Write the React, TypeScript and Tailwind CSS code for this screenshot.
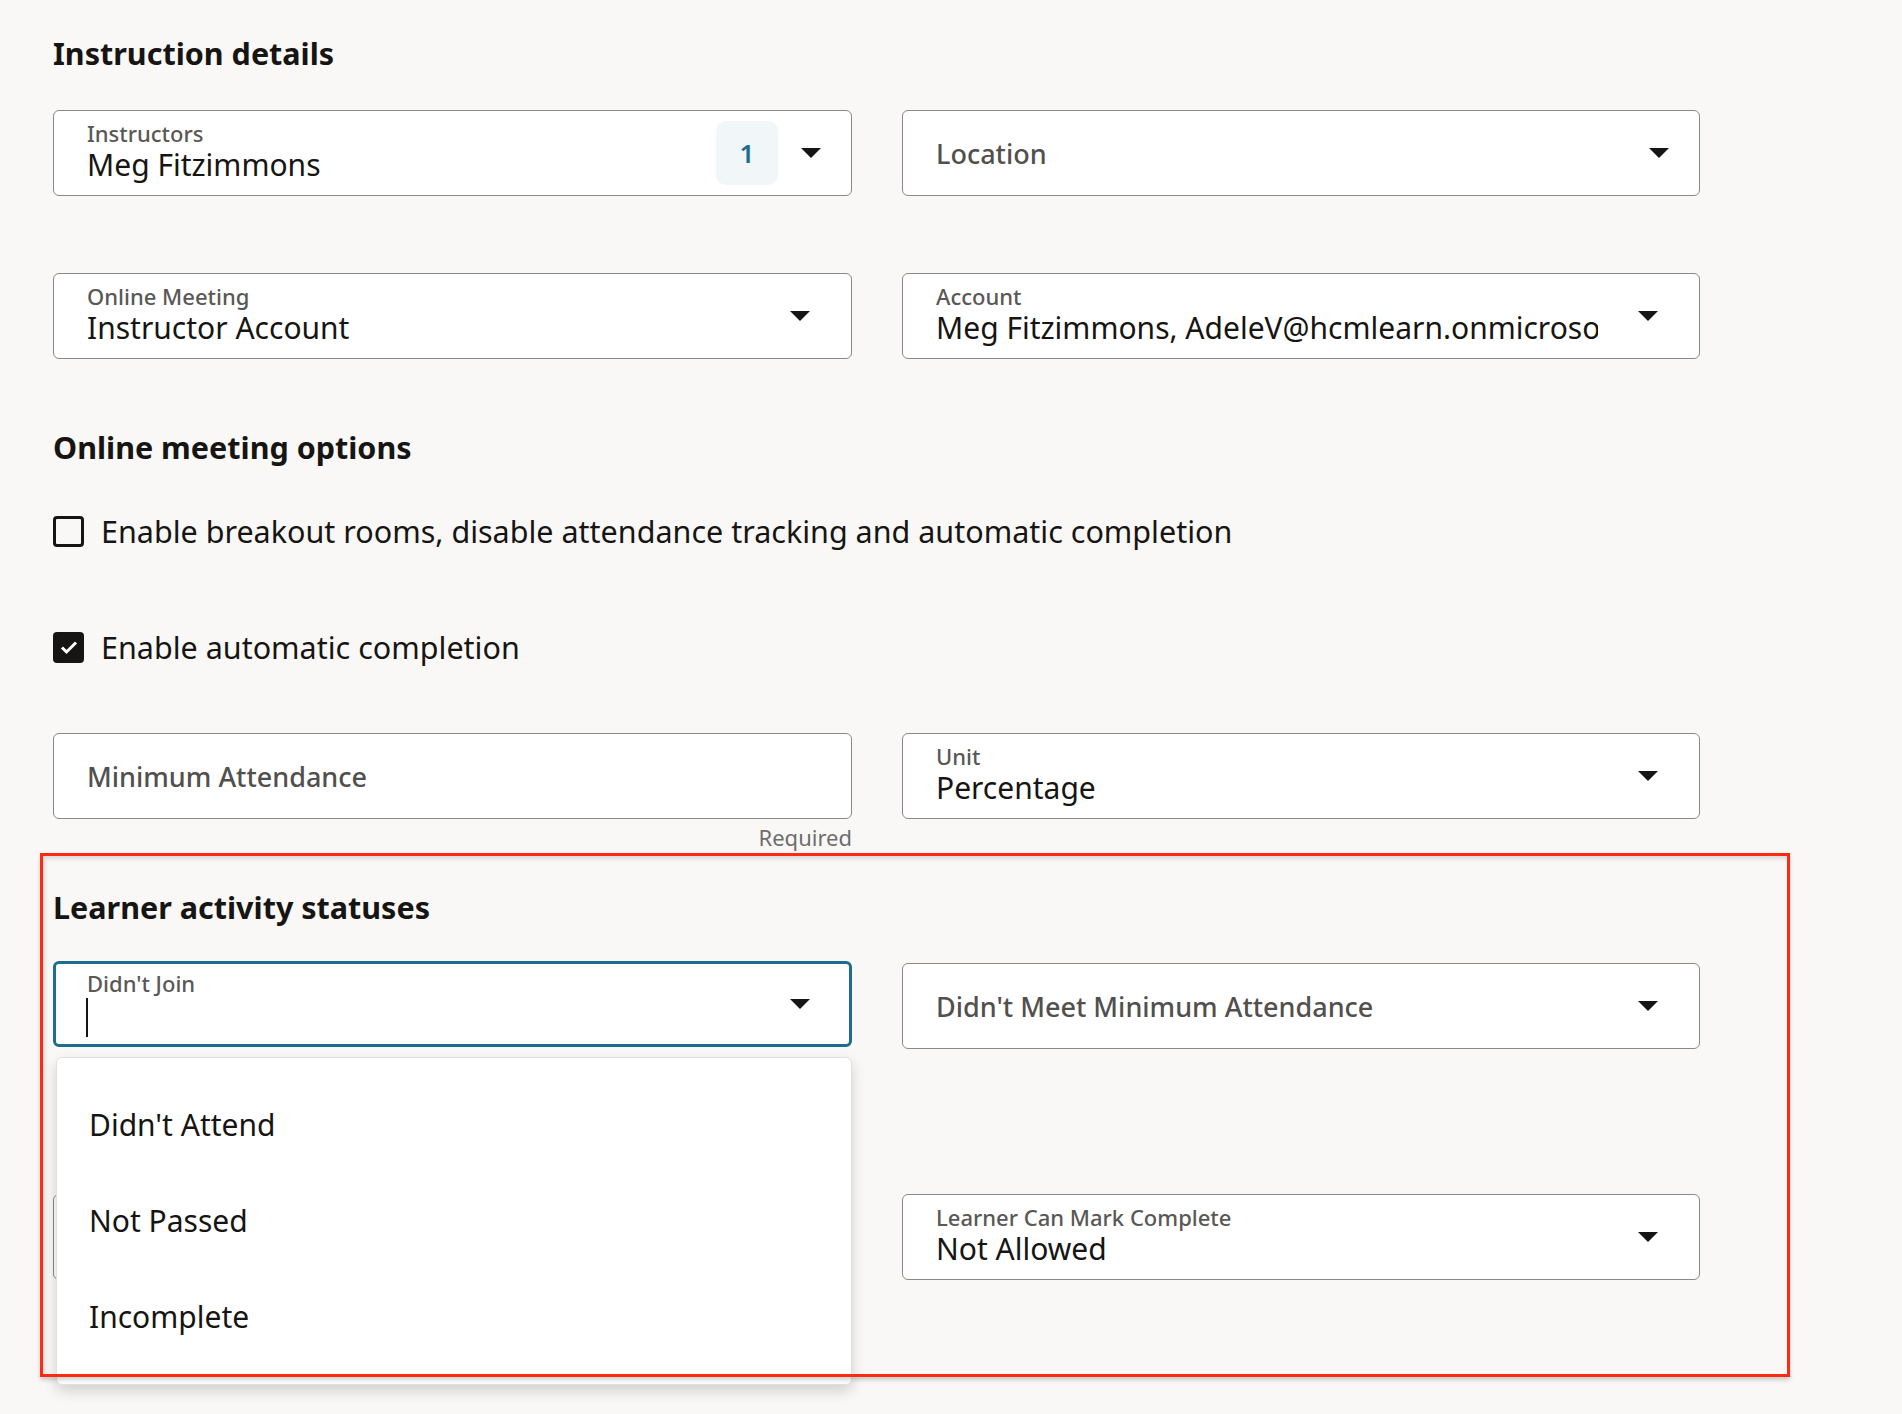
import React from "react";

type FieldProps = {
  label?: string;
  value?: string;
  placeholder?: string;
  badge?: string;
  focused?: boolean;
  tight?: boolean;
  cursor?: boolean;
  noArrow?: boolean;
};

function Arrow() {
  return (
    <svg width="20" height="10" viewBox="0 0 20 10" className="shrink-0">
      <path d="M0 0h20L10 10z" fill="#161513" />
    </svg>
  );
}

function Field({ label, value, placeholder, badge, focused, tight, cursor, noArrow }: FieldProps) {
  const frame = focused
    ? "border-[3px] border-[#1d6d8f] pl-[31px] pr-[39px]"
    : tight
      ? "border border-[#8b8987] pl-[33px] pr-[30px]"
      : "border border-[#8b8987] pl-[33px] pr-[41px]";

  return (
    <div className={`flex h-[86px] items-center rounded-[6px] bg-white ${frame}`}>
      <div className="mr-[40px] min-w-0 flex-1 whitespace-nowrap">
        {label && (
          <div className="text-[22px] leading-[24px] font-medium text-[#5a5856]">{label}</div>
        )}
        {value && (
          <div className="overflow-hidden text-[30px] leading-[40px]">{value}</div>
        )}
        {cursor && <div className="ml-[-1px] mt-[3px] h-[39px] w-[2px] bg-[#161513]" />}
        {placeholder && (
          <div className="pt-[2px] text-[27px] leading-[38px] font-medium text-[#52504e]">
            {placeholder}
          </div>
        )}
      </div>
      {badge && (
        <div className="mr-[23px] flex h-[64px] w-[62px] items-center justify-center rounded-[10px] bg-[#f1f6f9] text-[26px] font-semibold text-[#1d6d8f]">
          {badge}
        </div>
      )}
      {!noArrow && <Arrow />}
    </div>
  );
}

function Check({ checked, text }: { checked?: boolean; text: string }) {
  return (
    <div className="flex h-[42px] items-center gap-[17px]">
      {checked ? (
        <span className="flex h-[31px] w-[31px] items-center justify-center rounded-[4px] bg-[#161513]">
          <svg width="20" height="16" viewBox="0 0 20 16">
            <path d="M3 8.5l4.5 4.5L17 3.5" fill="none" stroke="#fff" strokeWidth="3" />
          </svg>
        </span>
      ) : (
        <span className="h-[31px] w-[31px] rounded-[4px] border-[3px] border-[#161513] bg-transparent" />
      )}
      <span className="text-[30.5px] leading-[42px]">{text}</span>
    </div>
  );
}

export default function App() {
  const options = ["Didn't Attend", "Not Passed", "Incomplete"];

  return (
    <div className="min-h-[1414px] bg-[#f9f8f6] pl-[53px] pt-[34px] font-['Noto_Sans',sans-serif] text-[#161513]">
      {/* Instruction details */}
      <h2 className="text-[30.5px] leading-[38px] font-bold">Instruction details</h2>
      <div className="mt-[38px] grid grid-cols-[799px_798px] gap-x-[50px] gap-y-[77px]">
        <Field label="Instructors" value="Meg Fitzimmons" badge="1" tight />
        <Field placeholder="Location" tight />
        <Field label="Online Meeting" value="Instructor Account" />
        <Field label="Account" value="Meg Fitzimmons, AdeleV@hcmlearn.onmicrosoft.com" />
      </div>

      {/* Online meeting options */}
      <h2 className="mt-[69px] text-[30.5px] leading-[38px] font-bold">Online meeting options</h2>
      <div className="mt-[44px]">
        <Check text="Enable breakout rooms, disable attendance tracking and automatic completion" />
      </div>
      <div className="mt-[74px]">
        <Check checked text="Enable automatic completion" />
      </div>

      <div className="mt-[65px] grid grid-cols-[799px_798px] gap-x-[50px]">
        <div>
          <Field placeholder="Minimum Attendance" noArrow />
          <div className="mt-[5px] text-right text-[22px] leading-[26px] text-[#6f6d6b]">Required</div>
        </div>
        <Field label="Unit" value="Percentage" />
      </div>

      {/* Learner activity statuses */}
      <section className="relative mt-[3px] ml-[-13px] w-[1750px] pl-[13px] pt-[35px] pb-[97px]">
        <h2 className="text-[30.5px] leading-[38px] font-bold">Learner activity statuses</h2>
        <div className="mt-[35px] grid grid-cols-[799px_798px] items-start gap-x-[50px]">
          <div className="relative">
            <Field label="Didn't Join" cursor focused />
            <div className="absolute left-[3px] top-[96px] z-10 w-[796px] rounded-[6px] border border-[#e2e0dd] bg-white pt-[18px] pb-[20px] shadow-[0_6px_14px_rgba(0,0,0,0.16)]">
              {options.map((o) => (
                <div key={o} className="flex h-[96px] items-center pl-[32px] text-[30px]">
                  {o}
                </div>
              ))}
            </div>
          </div>
          <div className="mt-[2px]">
            <Field placeholder="Didn't Meet Minimum Attendance" />
          </div>
        </div>
        <div className="mt-[145px] grid grid-cols-[799px_798px] gap-x-[50px]">
          <Field />
          <Field label="Learner Can Mark Complete" value="Not Allowed" />
        </div>

        {/* annotation frame */}
        <div className="pointer-events-none absolute inset-0 z-20 border-[3px] border-[#ff2a12] shadow-[0_3px_4px_rgba(0,0,0,0.18),inset_2px_3px_4px_rgba(0,0,0,0.12)]" />
      </section>
    </div>
  );
}
